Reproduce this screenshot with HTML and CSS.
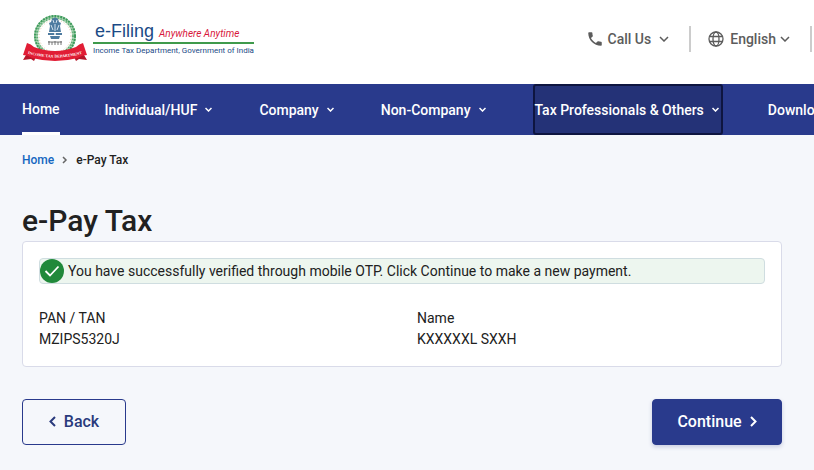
FILE: index.html
```html
<!DOCTYPE html>
<html lang="en">
<head>
  <meta charset="UTF-8">
  <meta name="viewport" content="width=device-width, initial-scale=1">
  <title>e-Pay Tax</title>
  <link rel="stylesheet" href="styles.css">
</head>
<body>
  <header class="topbar">
    <a class="brand" href="#">
      <svg class="emblem" viewBox="0 0 66 48" aria-hidden="true">
        <!-- wreath -->
        <circle cx="33" cy="22" r="19" fill="none" stroke="#a9d3b1" stroke-width="4"/>
        <circle cx="33" cy="22" r="20" fill="none" stroke="#3c9a5b" stroke-width="2" stroke-dasharray="2 1"/>
        <circle cx="33" cy="22" r="18" fill="none" stroke="#4aa266" stroke-width="1.500" stroke-dasharray="1 2"/>
        <circle cx="33" cy="22" r="16" fill="none" stroke="#e3c9a8" stroke-width="1" stroke-dasharray="1 2"/>
        <!-- lion capital -->
        <g fill="#4d7ba0">
          <path d="M30 5q3-3 6 0l1 3 2 1-1 3 1 6h-12l1-6-1-3 2-1z"/>
          <path d="M26 19h14v2h-14z"/>
          <path d="M28 22h10l-1 3h-8z"/>
        </g>
        <path d="M31 6l1 3M35 6l-1 3M29 11l2 5M37 11l-2 5M33 10v7" stroke="#d5e3ee" fill="none"/>
        <circle cx="33" cy="20" r="1" fill="#fff"/>
        <path d="M26 28h14M27 27v4M30 28v3M33 27v4M36 28v3M39 27v4" stroke="#555" stroke-width=".8" fill="none"/>
        <!-- ribbon -->
        <path d="M7 36L1 46l8-1 3 2 3-6z" fill="#b5162a"/>
        <path d="M59 36l6 10-8-1-3 2-3-6z" fill="#b5162a"/>
        <path d="M5 29q4 1 7 4 21 8 42 0 3-3 7-4l4 12q-5 0-9 3-23 6-46 0-4-3-9-3z" fill="#e11d35"/>
        <path id="ribbon-line" d="M3 39Q33 48 63 39" fill="none"/>
        <text class="ribbon-text"><textPath href="#ribbon-line" startOffset="50%" text-anchor="middle">INCOME TAX DEPARTMENT</textPath></text>
      </svg>
      <span class="brand-text">
        <span class="brand-title">e-Filing <em>Anywhere Anytime</em></span>
        <span class="brand-sub">Income Tax Department, Government of India</span>
      </span>
    </a>
    <div class="tools">
      <button class="tool call" type="button">
        <svg width="18" height="18" viewBox="0 0 24 24" fill="currentColor" aria-hidden="true"><path d="M6.6 10.8c1.4 2.8 3.8 5.1 6.6 6.6l2.2-2.2c.3-.3.7-.4 1-.2 1.1.4 2.3.6 3.6.6.6 0 1 .4 1 1V20c0 .6-.4 1-1 1C10.600 21 3 13.400 3 4c0-.6.5-1 1-1h3.500c.6 0 1 .4 1 1 0 1.300.2 2.500.6 3.600.1.300 0 .7-.2 1z"/></svg>
        <span>Call Us</span>
        <svg class="chevron" width="10" height="6" viewBox="0 0 10 6" aria-hidden="true"><path d="M1 1l4 4 4-4"/></svg>
      </button>
      <button class="tool language" type="button">
        <svg width="16" height="16" viewBox="0 0 16 16" fill="none" stroke="currentColor" stroke-width="1.300" aria-hidden="true"><circle cx="8" cy="8" r="7"/><ellipse cx="8" cy="8" rx="3" ry="7"/><path d="M1.500 5.500h13M1.500 10.500h13"/></svg>
        <span>English</span>
        <svg class="chevron" width="10" height="6" viewBox="0 0 10 6" aria-hidden="true"><path d="M1 1l4 4 4-4"/></svg>
      </button>
    </div>
  </header>

  <nav class="menu">
    <a class="active" href="#">Home</a>
    <a href="#">Individual/HUF <svg class="chevron" width="7" height="5" viewBox="0 0 7 5" aria-hidden="true"><path d="M.5 1l3 3 3-3"/></svg></a>
    <a href="#">Company <svg class="chevron" width="7" height="5" viewBox="0 0 7 5" aria-hidden="true"><path d="M.5 1l3 3 3-3"/></svg></a>
    <a href="#">Non-Company <svg class="chevron" width="7" height="5" viewBox="0 0 7 5" aria-hidden="true"><path d="M.5 1l3 3 3-3"/></svg></a>
    <a class="focused" href="#">Tax Professionals &amp; Others <svg class="chevron" width="7" height="5" viewBox="0 0 7 5" aria-hidden="true"><path d="M.5 1l3 3 3-3"/></svg></a>
    <a href="#">Downloads</a>
  </nav>

  <main>
    <div class="breadcrumb">
      <a href="#">Home</a>
      <svg class="chevron" width="6" height="8" viewBox="0 0 6 8" aria-hidden="true"><path d="M1 1l3 3-3 3"/></svg>
      <span>e-Pay Tax</span>
    </div>

    <h1>e-Pay Tax</h1>

    <section class="card">
      <div class="alert" role="status">
        <svg width="24" height="24" viewBox="0 0 24 24" aria-hidden="true"><circle cx="12" cy="12" r="12" fill="#20893a"/><path d="M5.500 12l4.500 4.500 8.500-9" fill="none" stroke="#fff" stroke-width="1.800"/></svg>
        <span>You have successfully verified through mobile OTP. Click Continue to make a new payment.</span>
      </div>
      <dl class="details">
        <div>
          <dt>PAN / TAN</dt>
          <dd>MZIPS5320J</dd>
        </div>
        <div>
          <dt>Name</dt>
          <dd>KXXXXXL SXXH</dd>
        </div>
      </dl>
    </section>

    <div class="actions">
      <button class="btn back" type="button">
        <svg class="chevron" width="7" height="11" viewBox="0 0 7 11" aria-hidden="true"><path d="M6 1L1.500 5.500 6 10"/></svg>
        Back
      </button>
      <button class="btn continue" type="button">
        Continue
        <svg class="chevron" width="7" height="11" viewBox="0 0 7 11" aria-hidden="true"><path d="M1 1l4.500 4.500L1 10"/></svg>
      </button>
    </div>
  </main>
</body>
</html>
```
FILE: styles.css
```css
* {
  box-sizing: border-box;
}
body {
  margin: 0;
  font-family: Roboto, sans-serif;
  font-size: 14px;
  color: #212121;
  background: #f5f7fb;
  overflow-x: hidden;
}
a {
  text-decoration: none;
}
button {
  font-family: inherit;
  cursor: pointer;
}
.chevron {
  fill: none;
  stroke: currentColor;
  stroke-width: 1.5;
  flex: none;
}

/* header */
.topbar {
  display: flex;
  justify-content: space-between;
  align-items: flex-start;
  min-height: 84px;
  padding: 14px 2px 0 22px;
  background: #fff;
}
.brand {
  display: flex;
  gap: 5px;
}
.emblem {
  width: 66px;
  height: 48px;
}
.ribbon-text {
  font-family: "Liberation Serif", serif;
  font-size: 4px;
  font-weight: bold;
  fill: #fff;
}
.brand-text {
  display: flex;
  flex-direction: column;
  padding-top: 6px;
  color: #1b4a86;
  white-space: nowrap;
}
.brand-title {
  padding-left: 2px;
  font-family: "Liberation Sans", sans-serif;
  font-size: 18px;
  line-height: 22px;
  border-bottom: 2px solid #3f9a4c;
}
.brand-title em {
  font-family: Roboto, sans-serif;
  font-size: 10px;
  line-height: 10px;
  color: #d8173c;
}
.brand-sub {
  font-size: 8px;
  line-height: 14px;
}
.tools {
  display: flex;
  padding-top: 12px;
}
.tool {
  display: flex;
  align-items: center;
  height: 26px;
  padding: 0;
  border: 0;
  border-right: 2px solid #ccc;
  background: none;
  font-size: 14px;
  font-weight: 500;
  color: #5c5c5c;
}
.call {
  gap: 4px;
  padding-right: 20px;
}
.call .chevron {
  margin-left: 4px;
}
.language {
  gap: 6px;
  padding: 0 20px 0 17px;
}
.language .chevron {
  margin-left: -2px;
}

/* menu */
.menu {
  display: flex;
  gap: 45px;
  height: 51px;
  padding-left: 22px;
  background: #293a8c;
  white-space: nowrap;
  overflow: hidden;
}
.menu a {
  display: flex;
  flex: none;
  align-items: center;
  gap: 8px;
  border: 2px solid transparent;
  border-width: 2px 2px 2px 0;
  font-weight: 500;
  color: #fff;
}
.menu .active {
  border-right: 0;
  border-bottom: 3px solid #fff;
}
.menu .focused {
  padding-right: 2px;
  border: 2px solid #0e1540;
  border-radius: 3px;
  background: #243277;
}

/* page */
main {
  padding: 16px 32px 25px 22px;
}
.breadcrumb {
  display: flex;
  align-items: center;
  gap: 8px;
  font-size: 12px;
  font-weight: 500;
  line-height: 18px;
}
.breadcrumb a {
  color: #1466c0;
}
.breadcrumb .chevron {
  color: #666;
}
h1 {
  margin: 32px 0 0;
  font-size: 30px;
  font-weight: 500;
  line-height: 40px;
}
.card {
  padding: 16px;
  border: 1px solid #d9dbe9;
  border-radius: 4px;
  background: #fff;
}
.alert {
  display: flex;
  align-items: center;
  gap: 4px;
  border: 1px solid #cfdde0;
  border-radius: 4px;
  background: #edf6ef;
}
.details {
  display: grid;
  grid-template-columns: 1fr 1fr;
  gap: 30px;
  margin: 24px 0 0;
  line-height: 21px;
}
.details dd {
  margin: 0;
}
.actions {
  display: flex;
  justify-content: space-between;
  margin-top: 32px;
}
.btn {
  display: flex;
  align-items: center;
  justify-content: center;
  gap: 8px;
  height: 46px;
  padding-bottom: 2px;
  border: 1px solid #293a8c;
  border-radius: 4px;
  font-size: 16px;
  font-weight: 500;
}
.btn .chevron {
  stroke-width: 2;
}
.back {
  width: 104px;
  background: transparent;
  color: #293a7c;
}
.continue {
  width: 130px;
  background: #293a8c;
  color: #fff;
  box-shadow: 0 2px 4px #c8cce0;
}
```
